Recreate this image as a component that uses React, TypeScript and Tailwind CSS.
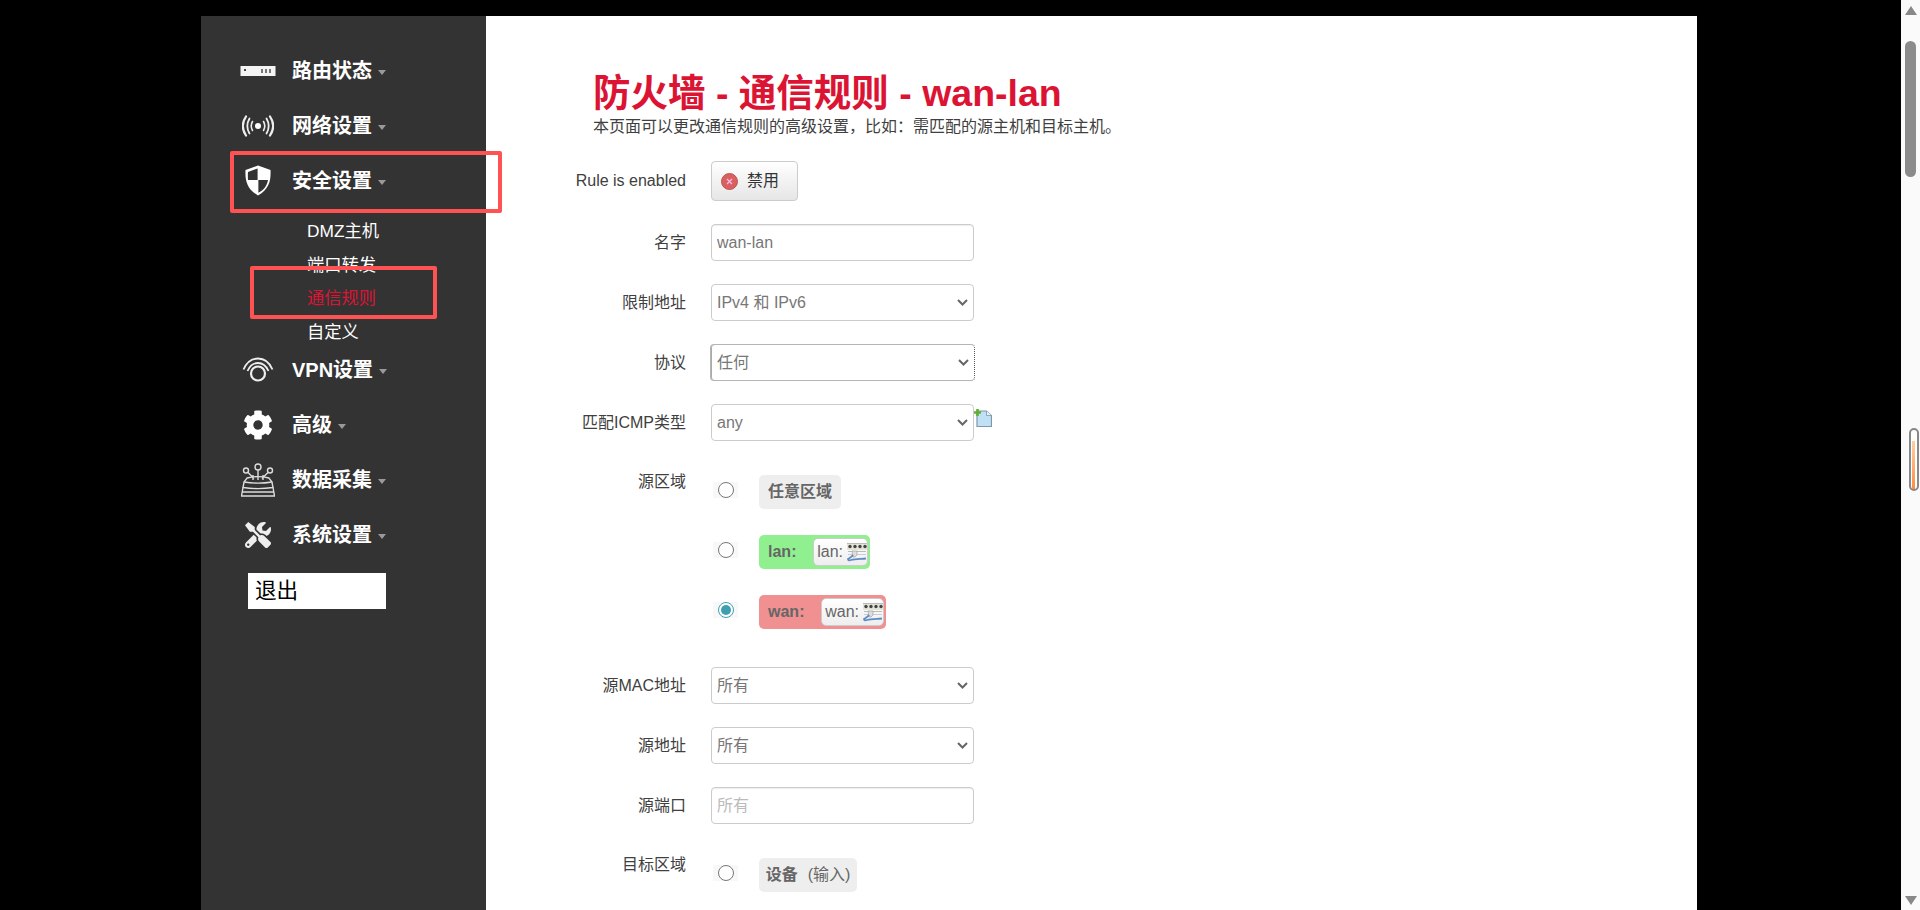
import React from "react";
import { FaCog, FaTools } from "react-icons/fa";

const font = { };

function Caret() {
  return <span className="ml-[6px] mt-[3px] h-0 w-0 border-x-[4.5px] border-t-[5px] border-x-transparent border-t-[#999]" />;
}

function RouterIcon() {
  return (
    <svg width="36" height="12" viewBox="0 0 36 12">
      <rect x="0.5" y="1" width="35" height="10" fill="#f4f4f4" />
      <rect x="4" y="4" width="2" height="2" fill="#444" />
      <rect x="21" y="4" width="2" height="4" fill="#777" />
      <rect x="25" y="4" width="2" height="4" fill="#777" />
      <rect x="29" y="4" width="2" height="4" fill="#777" />
    </svg>
  );
}

function WirelessIcon() {
  return (
    <svg width="32" height="22" viewBox="0 0 32 22" fill="none" stroke="#eee" strokeLinecap="round">
      <circle cx="16" cy="11" r="3" fill="#fff" stroke="none" />
      <path d="M10.5 6.5c-1.6 2.8-1.6 6.2 0 9" strokeWidth="1.6" />
      <path d="M7.5 3.5c-2.8 4.8-2.8 10.200 0 15" strokeWidth="1.8" />
      <path d="M4 1.500c-4 6-4 13 0 19" strokeWidth="2.200" />
      <path d="M21.500 6.500c1.600 2.800 1.600 6.200 0 9" strokeWidth="1.600" />
      <path d="M24.500 3.500c2.800 4.800 2.800 10.200 0 15" strokeWidth="1.800" />
      <path d="M28 1.500c4 6 4 13 0 19" strokeWidth="2.200" />
    </svg>
  );
}

function ShieldIcon() {
  return (
    <svg width="26" height="31" viewBox="0 0 26 31">
      <path d="M13 0.500 25.500 5c.5 10-1 19-12.500 25.500C1.500 24 0 15 .5 5z" fill="#fff" />
      <path d="M12.600 3.500V15H3C2.800 12 2.800 9.500 3 7z" fill="#333" />
      <path d="M13.400 15H23C22 20.500 19.500 24.500 13.400 27.800z" fill="#333" />
    </svg>
  );
}

function VpnIcon() {
  return (
    <svg width="32" height="26" viewBox="0 0 32 26" fill="none" stroke="#eee">
      <path d="M1.500 12.500C5 4.500 10 1.500 16 1.500s11 3 14.500 11" strokeWidth="1.800" />
      <path d="M5.500 14C8 8.500 11.500 6 16 6s8 2.500 10.500 8" strokeWidth="1.800" />
      <circle cx="16" cy="16.500" r="7" strokeWidth="2.200" />
    </svg>
  );
}

function DataIcon() {
  return (
    <svg width="34" height="34" viewBox="0 0 34 34" fill="none" stroke="#ddd" strokeWidth="1.400">
      <circle cx="17" cy="4" r="3" />
      <circle cx="5" cy="7.500" r="2.500" />
      <circle cx="29" cy="7.500" r="2.500" />
      <path d="M17 7v10M7 9.500l6 6M27 9.500l-6 6M12 12v5M22 12v5" />
      <path d="M6 15c8-2 14-2 22 0l3 4c-9 1.500-19 1.500-28 0z" />
      <path d="M3 19.500l-1 5c10 1.500 20 1.500 30 0l-1-5" />
      <path d="M2 24.500l-1.500 8.500h33L32 24.500M1.500 29h31" />
    </svg>
  );
}

function NavItem({ icon, label }: { icon: React.ReactNode; label: string }) {
  return (
    <div className="flex h-[55px] items-center pl-[37px]">
      <span className="flex w-[40px] items-center justify-center">{icon}</span>
      <span className="ml-[14px] text-[20px] font-bold text-white">{label}</span>
      <Caret />
    </div>
  );
}

function Row({ label, mt, children }: { label: string; mt: string; children: React.ReactNode }) {
  return (
    <div className={`flex items-center ${mt}`}>
      <label className="w-[200px] text-right text-[16px] text-[#404040]">{label}</label>
      <div className="ml-[25px] flex items-start">{children}</div>
    </div>
  );
}

function Select({ value, focus }: { value: string; focus?: boolean }) {
  return (
    <div className={focus ? "relative -mx-px" : "relative"}>
      <select
        defaultValue={value}
        className={
          focus
            ? "h-[37px] w-[265px] appearance-none rounded-[4px] border border-[#b5b5b5] pl-[6px] text-[16px] text-[#777] shadow-[inset_1px_0_0_#aaa] [border-right-color:#555] [border-right-style:dotted]"
            : "h-[37px] w-[263px] appearance-none rounded-[4px] border border-[#ccc] bg-white pl-[5px] text-[16px] text-[#777]"
        }
      >
        <option>{value}</option>
      </select>
      <svg className="pointer-events-none absolute right-[6px] top-[14px]" width="11" height="9" viewBox="0 0 11 9" fill="none" stroke="#666" strokeWidth="2">
        <path d="M1 2l4.500 4.500L10 2" />
      </svg>
    </div>
  );
}

function Input({ value, placeholder }: { value?: string; placeholder?: string }) {
  return (
    <input
      readOnly
      value={value}
      placeholder={placeholder}
      className="h-[37px] w-[263px] rounded-[4px] border border-[#ccc] pl-[5px] text-[16px] text-[#777] shadow-[inset_0_1px_1px_rgba(0,0,0,0.075)] placeholder:text-[#bbb]"
    />
  );
}

function Radio({ checked }: { checked?: boolean }) {
  return (
    <span className="ml-[2px] mt-[7px] flex h-[16px] w-[25px] items-center justify-center bg-[#f8f8f8]">
      {checked ? (
        <span className="flex h-[16px] w-[16px] items-center justify-center rounded-full border-[1.5px] border-[#3f9fb2] bg-white">
          <span className="h-[10px] w-[10px] rounded-full bg-[#3f9fb2]" />
        </span>
      ) : (
        <span className="h-[16px] w-[16px] rounded-full border-[1.5px] border-[#777] bg-white" />
      )}
    </span>
  );
}

function NetIcon() {
  return (
    <svg width="20" height="20" viewBox="0 0 20 20">
      <rect x="0" y="1" width="20" height="7" fill="#e4e4d8" />
      <rect x="0" y="1" width="20" height="1" fill="#bbb" />
      <circle cx="3" cy="4.500" r="1.700" fill="#444" />
      <circle cx="8" cy="4.500" r="1.700" fill="#444" />
      <circle cx="13" cy="4.500" r="1.700" fill="#444" />
      <circle cx="18" cy="4.500" r="1.700" fill="#444" />
      <rect x="1" y="9" width="18" height="1" fill="#bbb" />
      <rect x="1" y="12" width="18" height="1" fill="#ccc" />
      <path d="M5 9h5v4l-2 2H6z" fill="#ddd" stroke="#999" strokeWidth="0.600" />
      <path d="M6 13c-1 2-4 3-5 4 0 1.500 1.500 1.500 3 1 4-1.200 9-1 15-1.500" fill="none" stroke="#5d8cc4" strokeWidth="1.800" />
    </svg>
  );
}

function Zone({ label, bg, width }: { label: string; bg: string; width: string }) {
  return (
    <div className={`ml-[21px] flex h-[34px] items-center justify-between rounded-[5px] pl-[9px] pr-[2px] ${bg} ${width}`}>
      <span className="text-[16px] font-bold text-[#666]">{label}:</span>
      <span className="flex h-[28px] items-center gap-[4px] rounded-[5px] border border-[#ccc] bg-gradient-to-b from-white to-[#eee] pl-[3px] text-[16px] text-[#666]">
        <span>{label}:</span>
        <NetIcon />
      </span>
    </div>
  );
}

function AddIcon() {
  return (
    <svg className="mt-[5px]" width="18" height="18" viewBox="0 0 18 18">
      <path d="M3 2h9.500L17.500 6.500V17.500H3z" fill="#bfe0f5" stroke="#7f96ad" strokeWidth="1.200" />
      <path d="M12.500 2v4.500h5" fill="#e8f4fc" stroke="#7f96ad" strokeWidth="0.800" />
      <path d="M3.500 0v7M0 3.500h7" stroke="#5fb030" strokeWidth="2.600" />
    </svg>
  );
}

export default function App() {
  return (
    <div
      className="relative flex h-[910px] overflow-hidden bg-black pl-[201px] pt-[16px]"
      style={{ fontFamily: '"Liberation Sans", "Noto Sans CJK SC", sans-serif' }}
    >
      <aside className="w-[285px] shrink-0 bg-[#333] pt-[27px]">
        <NavItem icon={<RouterIcon />} label="路由状态" />
        <NavItem icon={<WirelessIcon />} label="网络设置" />
        <NavItem icon={<ShieldIcon />} label="安全设置" />
        <div className="flex h-[134.5px] flex-col gap-[11.500px] pl-[106px] pt-[12px] text-[17.300px] leading-[22px] text-white">
          <a className="h-[22px]">DMZ主机</a>
          <a className="h-[22px]">端口转发</a>
          <a className="h-[22px] text-[#dc1434]">通信规则</a>
          <a className="h-[22px]">自定义</a>
        </div>
        <NavItem icon={<VpnIcon />} label="VPN设置" />
        <NavItem icon={<FaCog size={30} color="#fff" />} label="高级" />
        <NavItem icon={<DataIcon />} label="数据采集" />
        <NavItem icon={<FaTools size={26} color="#eee" />} label="系统设置" />
        <div className="ml-[47px] mt-[10.500px] flex h-[36px] w-[138px] items-center bg-white pl-[7px] text-[21.600px] text-black">退出</div>
      </aside>

      <main className="w-[1211px] shrink-0 bg-white">
        <h1 className="ml-[107px] mt-[54px] text-[37.500px] font-bold leading-[46px] text-[#dc1434]">防火墙 - 通信规则 - wan-lan</h1>
        <p className="ml-[107px] text-[16px] leading-[22px] text-[#404040]">本页面可以更改通信规则的高级设置，比如：需匹配的源主机和目标主机。</p>

        <Row label="Rule is enabled" mt="mt-[23px]">
          <button className="flex h-[40px] w-[87px] items-center rounded-[4px] border border-[#ccc] bg-gradient-to-b from-white to-[#e6e6e6] pl-[9px] text-[16px] text-[#333]">
            <svg width="17" height="17" viewBox="0 0 17 17">
              <circle cx="8.500" cy="8.500" r="8" fill="#d9605f" stroke="#b55" />
              <path d="M6 6l5 5M11 6l-5 5" stroke="#fbe" strokeWidth="1.200" />
            </svg>
            <span className="ml-[9px]">禁用</span>
          </button>
        </Row>
        <Row label="名字" mt="mt-[23px]"><Input value="wan-lan" /></Row>
        <Row label="限制地址" mt="mt-[23px]"><Select value="IPv4 和 IPv6" /></Row>
        <Row label="协议" mt="mt-[23px]"><Select value="任何" focus /></Row>
        <Row label="匹配ICMP类型" mt="mt-[23px]"><Select value="any" /><AddIcon /></Row>

        <div className="mt-[34px] flex">
          <label className="w-[200px] pt-[-2px] text-right text-[16px] leading-[14px] text-[#404040]">源区域</label>
          <div className="ml-[25px] flex flex-col gap-[26px]">
            <div className="flex items-start">
              <Radio />
              <div className="ml-[21px] flex h-[34px] w-[82px] items-center justify-center rounded-[5px] bg-[#eee] text-[16px] font-bold text-[#666]">任意区域</div>
            </div>
            <div className="flex items-start">
              <Radio />
              <Zone label="lan" bg="bg-[#90f090]" width="w-[111px]" />
            </div>
            <div className="flex items-start">
              <Radio checked />
              <Zone label="wan" bg="bg-[#f09090]" width="w-[127px]" />
            </div>
          </div>
        </div>

        <Row label="源MAC地址" mt="mt-[38px]"><Select value="所有" /></Row>
        <Row label="源地址" mt="mt-[23px]"><Select value="所有" /></Row>
        <Row label="源端口" mt="mt-[23px]"><Input placeholder="所有" /></Row>

        <div className="mt-[34px] flex">
          <label className="w-[200px] text-right text-[16px] leading-[14px] text-[#404040]">目标区域</label>
          <div className="ml-[25px] flex items-start">
            <Radio />
            <div className="ml-[21px] flex h-[34px] w-[98px] items-center justify-center rounded-[5px] bg-[#eee] text-[16px] text-[#666]">
              <b>设备</b>
              <span className="ml-[10px]">(输入)</span>
            </div>
          </div>
        </div>
      </main>

      <div className="ml-[204px] flex w-[19px] shrink-0 flex-col items-center bg-[#fafafa] -mt-[16px] pt-[6px]">
        <span className="h-0 w-0 border-x-[6px] border-b-[9px] border-x-transparent border-b-[#888]" />
        <span className="mt-[26px] h-[136px] w-[11px] rounded-full bg-[#8b8b8b]" />
        <span className="ml-[6px] mt-[251px] flex h-[63px] w-[10px] justify-center rounded-full border-2 border-[#888] bg-white pt-[11px]">
          <span className="h-[48px] w-[3px] bg-gradient-to-b from-[#ffd0a0] to-[#ff8a40]" />
        </span>
        <span className="mt-auto mb-[5px] h-0 w-0 border-x-[6px] border-t-[9px] border-x-transparent border-t-[#888]" />
      </div>

      {/* red annotation boxes drawn over the screenshot */}
      <div className="pointer-events-none absolute left-[230px] top-[151px] h-[62px] w-[272px] rounded-[2px] border-[4.500px] border-[#ff5252]" />
      <div className="pointer-events-none absolute left-[250px] top-[266px] h-[53px] w-[187px] rounded-[2px] border-[4.500px] border-[#ff5252]" />
    </div>
  );
}
